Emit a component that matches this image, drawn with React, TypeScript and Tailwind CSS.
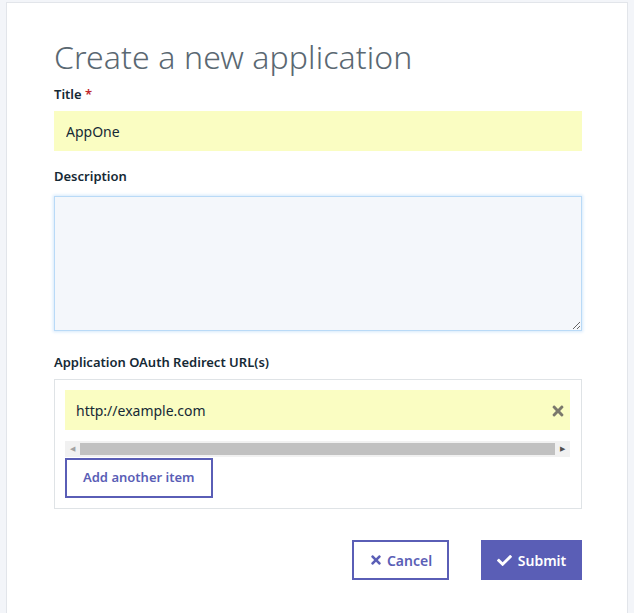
import React, { useState } from "react";
import { FaTimes, FaCheck } from "react-icons/fa";

export default function App() {
  const [title, setTitle] = useState("AppOne");
  const [desc, setDesc] = useState("");
  const [urls, setUrls] = useState<string[]>(["http://example.com"]);

  return (
    <div
      className="min-h-[613px] bg-[#f3f5f9] px-[6px] pt-[2px]"
      style={{ fontFamily: '"Noto Sans", "Open Sans", sans-serif' }}
    >
      <div className="min-h-[611px] bg-white border-t border-x border-[#e2e5ea] pl-[47px] pr-[45px] pt-[34px]">
        <h1 className="text-[32px] font-light leading-[40px] text-[#5a6872] tracking-[0.1px]">
          Create a new application
        </h1>

        <label className="block mt-[8px] text-[13px] font-semibold text-[#152935] leading-[18px]">
          Title <span className="text-[#c0272d]">*</span>
        </label>
        <input
          value={title}
          onChange={(e) => setTitle(e.target.value)}
          className="mt-[8px] block w-full h-[40px] bg-[#fafdc2] px-[12px] text-[14px] text-[#152935] outline-none"
        />

        <label className="block mt-[16px] text-[13px] font-semibold text-[#152935] leading-[18px]">
          Description
        </label>
        <textarea
          value={desc}
          onChange={(e) => setDesc(e.target.value)}
          className="mt-[11px] block w-full h-[135px] bg-[#f4f7fb] border border-[#b9daf7] shadow-[0_0_3px_1px_#d6e9fb] outline-none px-[12px] py-[8px] text-[14px]"
        />

        <label className="block mt-[22px] text-[13px] font-semibold text-[#152935] leading-[18px]">
          Application OAuth Redirect URL(s)
        </label>
        <div className="mt-[8px] border border-[#dfe3e6] pl-[10px] pr-[11px] pt-[10px] pb-[10px]">
          {urls.map((u, i) => (
            <div key={i} className="relative">
              <input
                value={u}
                onChange={(e) =>
                  setUrls(urls.map((x, j) => (j === i ? e.target.value : x)))
                }
                className="block w-full h-[40px] bg-[#fafdc2] px-[11px] pr-[30px] text-[14px] text-[#152935] outline-none"
              />
              <button
                onClick={() => setUrls(urls.filter((_, j) => j !== i))}
                className="absolute right-[4px] top-[13px] text-[#7a786c]"
              >
                <FaTimes className="w-[16px] h-[16px]" />
              </button>
            </div>
          ))}
          <div className="mt-[11px] h-[16px] bg-[#f1f1f1] flex items-center">
            <span className="w-[15px] flex justify-center text-[#a3a3a3] text-[7px]">◀</span>
            <div className="flex-1 h-[12px] bg-[#c1c1c1]" />
            <span className="w-[15px] flex justify-center text-[#505050] text-[7px]">▶</span>
          </div>
          <button
            onClick={() => setUrls([...urls, ""])}
            className="mt-[1px] h-[40px] px-[16px] border-2 border-[#5a5eb6] text-[#5a5eb6] text-[13px] font-semibold"
          >
            Add another item
          </button>
        </div>

        <div className="mt-[31px] flex justify-end gap-[32px]">
          <button className="h-[40px] w-[97px] border-2 border-[#5a5eb6] text-[#5a5eb6] text-[14px] font-semibold flex items-center justify-center gap-[4px]">
            <FaTimes className="w-[14px] h-[14px]" />
            Cancel
          </button>
          <button className="h-[40px] w-[101px] bg-[#5a5eb6] text-white text-[14px] font-semibold flex items-center justify-center gap-[6px]">
            <FaCheck className="w-[15px] h-[15px]" />
            Submit
          </button>
        </div>
      </div>
    </div>
  );
}
